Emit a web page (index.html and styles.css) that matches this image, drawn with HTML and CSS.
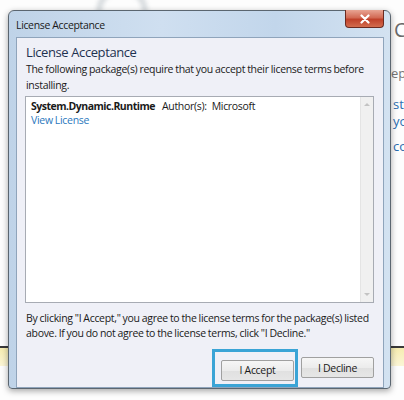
FILE: index.html
```html
<!DOCTYPE html>
<html>
<head>
<meta charset="utf-8">
<link rel="stylesheet" href="styles.css">
</head>
<body>
<div class="desktop">
  <div class="blur-ring"></div>
  <div class="bg-text bg-c">C</div>
  <div class="bg-text bg-epl">epl</div>
  <div class="bg-text bg-sta link">sta</div>
  <div class="bg-text bg-yo link">yo</div>
  <div class="bg-text bg-co link">co</div>
  <div class="band-line"></div>
  <div class="band-yellow"></div>

  <div class="window">
    <div class="titlebar">
      <span class="title">License Acceptance</span>
      <div class="close">
        <svg width="12" height="10" viewBox="0 0 12 10"><path d="M2.5 1.5 L9.5 8.5 M9.5 1.5 L2.5 8.5" stroke="#fff" stroke-width="2.2" stroke-linecap="round"/></svg>
      </div>
    </div>
    <div class="client">
      <h1 class="heading">License Acceptance</h1>
      <p class="desc">The following package(s) require that you accept their license terms before installing.</p>
      <div class="listbox">
        <div class="items">
          <div class="pkg"><span class="pkg-name">System.Dynamic.Runtime</span><span class="pkg-author">Author(s):&nbsp; Microsoft</span></div>
          <a class="view-link">View License</a>
        </div>
        <div class="scrollbar">
          <span class="arrow up"></span>
          <span class="arrow down"></span>
        </div>
      </div>
      <p class="footer-text">By clicking "I Accept," you agree to the license terms for the package(s) listed above. If you do not agree to the license terms, click "I Decline."</p>
      <div class="buttons">
        <div class="focus-ring"><button class="btn">I Accept</button></div>
        <button class="btn">I Decline</button>
      </div>
    </div>
  </div>
</div>
</body>
</html>
```
FILE: styles.css
```css
html, body {
  margin: 0;
  padding: 0;
  background: #ffffff;
}
body {
  width: 404px;
  height: 400px;
  overflow: hidden;
  font-family: "Open Sans", "Noto Sans", sans-serif;
}
.desktop {
  position: relative;
  width: 404px;
  height: 400px;
  background: #fdfdfd;
}
.blur-ring {
  position: absolute;
  left: 96px;
  top: -14px;
  width: 40px;
  height: 40px;
  border-radius: 50%;
  border: 6px solid rgba(150, 160, 170, 0.35);
  filter: blur(2px);
}
.bg-text {
  position: absolute;
  left: 393px;
  font-size: 13px;
  color: #555;
  white-space: nowrap;
}
.bg-c { top: 16px; font-size: 20px; color: #6a6a6a; left: 394px; }
.bg-epl { top: 64px; left: 391px; color: #777; }
.bg-sta { top: 95px; }
.bg-yo { top: 112px; }
.bg-co { top: 137px; }
.link { color: #2a6db0; }
.band-line {
  position: absolute;
  left: 0;
  right: 0;
  top: 346px;
  height: 2px;
  background: #3a3a3a;
}
.band-yellow {
  position: absolute;
  left: 0;
  right: 0;
  top: 348px;
  height: 18px;
  background: linear-gradient(#f6ecb0, #fbf5d6);
}
.window {
  position: absolute;
  left: 8px;
  top: 10px;
  width: 383px;
  height: 379px;
  box-sizing: border-box;
  border: 1px solid #5b6670;
  border-radius: 6px 6px 4px 4px;
  background: linear-gradient(90deg, #bfd3e8 0%, #cfdff0 40%, #c2d6eb 70%, #d3e2f1 100%);
  box-shadow: 0 2px 6px rgba(0, 0, 0, 0.35);
  display: flex;
  flex-direction: column;
  padding: 0 6px 5px 7px;
}
.titlebar {
  height: 26px;
  display: flex;
  align-items: center;
  justify-content: space-between;
  flex: none;
}
.title {
  font-size: 10.5px;
  letter-spacing: -0.35px;
  color: #1a1a1a;
  margin-top: 1px;
}
.close {
  align-self: flex-start;
  margin-top: -1px;
  width: 39px;
  height: 18px;
  box-sizing: border-box;
  border: 1px solid #6b2a20;
  border-top: none;
  border-radius: 0 0 4px 4px;
  background: linear-gradient(#e8a493 0%, #d26a54 45%, #c0412a 55%, #d36c4e 100%);
  display: flex;
  align-items: center;
  justify-content: center;
}
.client {
  flex: 1;
  border: 1px solid #8fa4bb;
  background: #eff0f7;
  padding: 0 9px 0 8px;
  display: flex;
  flex-direction: column;
}
.heading {
  font-weight: normal;
  font-size: 13px;
  letter-spacing: -0.4px;
  color: #1e3250;
  margin: 5px 0 0 1px;
  line-height: 18px;
}
.desc,
.footer-text,
.pkg,
.view-link,
.btn {
  font-size: 10.5px;
  letter-spacing: -0.3px;
  word-spacing: -0.4px;
}
.desc {
  color: #1a1a1a;
  margin: 0 0 0 1px;
  line-height: 16px;
}
.listbox {
  margin-top: 3px;
  height: 207px;
  flex: none;
  box-sizing: border-box;
  border: 1px solid #a7abb3;
  background: #ffffff;
  display: flex;
}
.items {
  flex: 1;
  padding: 2px 5px;
}
.pkg {
  line-height: 15px;
  color: #1a1a1a;
  white-space: nowrap;
  word-spacing: 0;
}
.pkg-name {
  font-weight: bold;
  letter-spacing: -0.5px;
  margin-right: 7px;
}
.view-link {
  display: block;
  line-height: 13px;
  color: #2a78bd;
}
.scrollbar {
  width: 12px;
  background: #f0f0f0;
  border-left: 1px solid #e4e4e4;
  display: flex;
  flex-direction: column;
  justify-content: space-between;
  align-items: center;
  padding: 6px 0;
}
.arrow {
  width: 0;
  height: 0;
  border-left: 3px solid transparent;
  border-right: 3px solid transparent;
}
.arrow.up { border-bottom: 3px solid #c3c3c3; }
.arrow.down { border-top: 3px solid #c3c3c3; }
.footer-text {
  color: #1a1a1a;
  margin: 8px 0 0 1px;
  line-height: 15px;
}
.buttons {
  margin-top: 8px;
  display: flex;
  justify-content: flex-end;
  align-items: flex-start;
  gap: 3px;
  padding-right: 0;
}
.focus-ring {
  border: 3px solid #3aa4d6;
  padding: 5px 1px 3px 6px;
}
.btn {
  width: 73px;
  height: 21px;
  box-sizing: border-box;
  border: 1px solid #a0a0a0;
  border-radius: 2px;
  background: linear-gradient(#f6f6f6 0%, #ececec 50%, #e0e0e0 51%, #e6e6e6 100%);
  font-family: "Open Sans", "Noto Sans", sans-serif;
  word-spacing: 0;
  color: #1a1a1a;
  padding: 0;
}
.buttons > .btn {
  margin-top: 8px;
}
```
